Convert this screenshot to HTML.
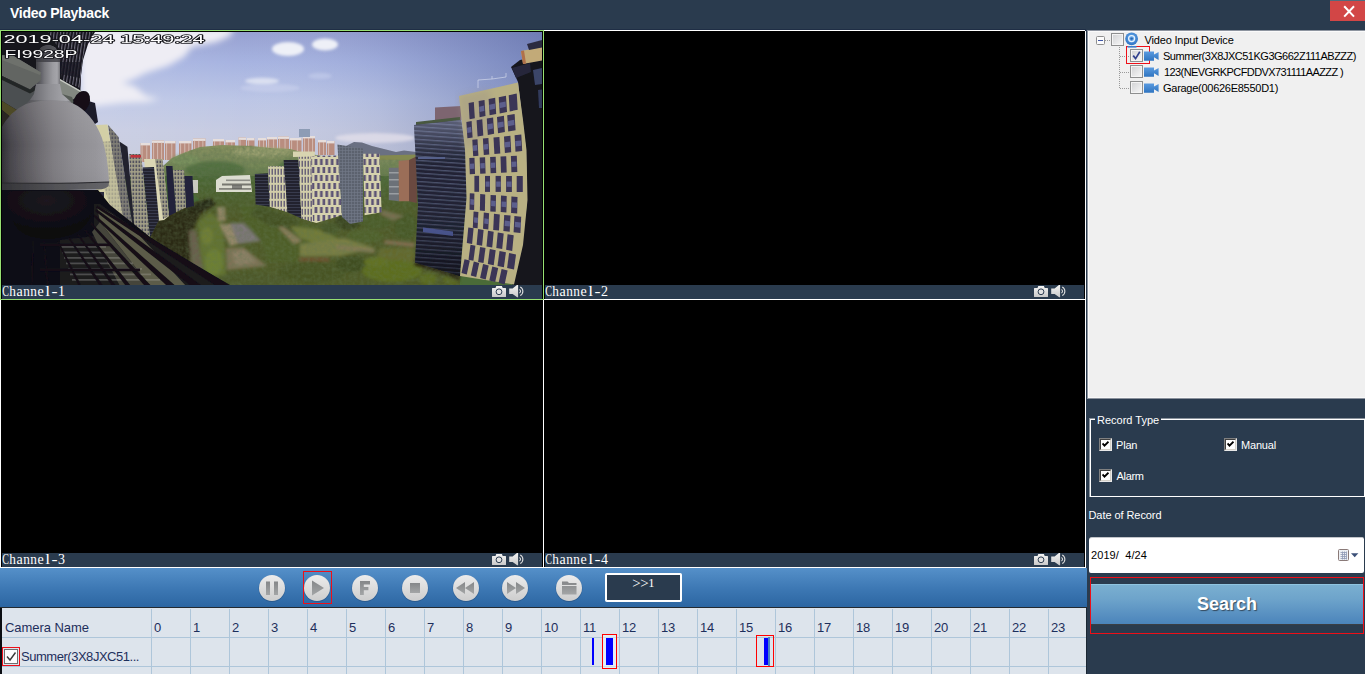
<!DOCTYPE html>
<html><head><meta charset="utf-8">
<style>
*{box-sizing:border-box;margin:0;padding:0}
html,body{width:1365px;height:674px;overflow:hidden;background:#2a3b4e;font-family:"Liberation Sans",sans-serif;}
.abs{position:absolute}
#title{position:absolute;left:10px;top:4px;color:#fff;font-weight:bold;font-size:14px;line-height:18px;letter-spacing:-0.25px;white-space:nowrap}
#close{position:absolute;left:1330px;top:0;width:35px;height:21px;background:#d24646;border-top:1px solid #516b7c}
.panel{position:absolute;background:#000;border:1px solid #fff}
.lbl{position:absolute;left:1px;right:1px;bottom:0;height:14px;background:#2a3b4e;color:#fff;font-family:"Liberation Mono",monospace;font-size:11.5px;line-height:14px;white-space:nowrap}
.lbl span{position:absolute;left:0px;top:0px}
#tree{position:absolute;left:1087px;top:30px;width:278px;height:369px;background:#f0f0f0;border-left:1px solid #8d949f;border-top:1px solid #8d949f;box-shadow:inset 1px 1px 0 #fafafa, inset 0 -2px 0 #f8f8f8}
.tl{position:absolute;font-size:11px;color:#000;white-space:nowrap;line-height:16px}
#toolbar{position:absolute;left:0;top:568px;width:1087px;height:39px;background:linear-gradient(#5590c9,#3c77b3 55%,#2c66a2)}
#tline{position:absolute;left:2px;top:608px;width:1084px;height:66px;background:#dde4ec;overflow:hidden}
.cbw{position:absolute;width:13px;height:13px;background:#fff;border:1px solid #8e8f8f}
.wt{position:absolute;color:#fff;font-size:11px;white-space:nowrap;line-height:14px}
</style></head><body>
<div id="title">Video Playback</div>
<div id="close"><svg class="abs" style="left:0;top:0" width="35" height="20" viewBox="0 0 35 20"><path d="M14.2 5.2 L24 15.6 M24 5.2 L14.2 15.6" stroke="#fff" stroke-width="2" fill="none"/></svg></div>
<div class="abs" style="left:0;top:29px;width:1086px;height:1px;background:#1f2e45"></div>

<!-- video panels -->
<div class="panel" id="p2" style="left:543px;top:30px;width:543px;height:270px"><div class="lbl" style="left:1px"><svg class="abs" style="left:0;top:0" width="80" height="14" font-family="Liberation Serif" font-size="14" fill="#fff" text-anchor="middle"><text transform="translate(3.6 11) scale(0.72 1)">C</text><text transform="translate(10.6 11) scale(0.95 1)">h</text><text x="17.6" y="11">a</text><text transform="translate(24.6 11) scale(0.95 1)">n</text><text transform="translate(31.6 11) scale(0.95 1)">n</text><text x="38.6" y="11">e</text><text transform="translate(45.6 11) scale(1.25 1)">l</text><text transform="translate(52.6 11) scale(1.3 1)">-</text><text x="59.6" y="11">2</text></svg><svg class="abs" style="right:17px;top:0" width="34" height="14" viewBox="491 285 34 14"><defs><linearGradient id="ig" x1="0" y1="0" x2="0" y2="1"><stop offset="0" stop-color="#f4f4f4"/><stop offset="1" stop-color="#c9c9c9"/></linearGradient></defs><path d="M492 288.6 q0 -0.6 .6 -.6 h2.9 l0.8 -2 h5.6 l0.8 2 h2.7 q.6 0 .6 .6 v7.8 q0 .6 -.6 .6 h-12.8 q-.6 0 -.6 -.6z" fill="url(#ig)"/><circle cx="499" cy="291.8" r="2.9" fill="#e2e2e2" stroke="#2c3d52" stroke-width="1"/><path d="M509.2 288.4 h3.4 l4.6 -3.6 h0.9 v12.4 h-0.9 l-4.6 -3.2 h-3.4 z" fill="url(#ig)"/><path d="M519.4 289.4 a2 2 0 0 1 0 3.6 M520.2 286.9 a4.8 4.8 0 0 1 0 8.6" stroke="#dcdcdc" fill="none" stroke-width="1.1"/></svg></div></div>
<div class="panel" id="p3" style="left:0;top:299px;width:544px;height:269px"><div class="lbl"><svg class="abs" style="left:0;top:0" width="80" height="14" font-family="Liberation Serif" font-size="14" fill="#fff" text-anchor="middle"><text transform="translate(3.6 11) scale(0.72 1)">C</text><text transform="translate(10.6 11) scale(0.95 1)">h</text><text x="17.6" y="11">a</text><text transform="translate(24.6 11) scale(0.95 1)">n</text><text transform="translate(31.6 11) scale(0.95 1)">n</text><text x="38.6" y="11">e</text><text transform="translate(45.6 11) scale(1.25 1)">l</text><text transform="translate(52.6 11) scale(1.3 1)">-</text><text x="59.6" y="11">3</text></svg><svg class="abs" style="right:17px;top:0" width="34" height="14" viewBox="491 285 34 14"><defs><linearGradient id="ig" x1="0" y1="0" x2="0" y2="1"><stop offset="0" stop-color="#f4f4f4"/><stop offset="1" stop-color="#c9c9c9"/></linearGradient></defs><path d="M492 288.6 q0 -0.6 .6 -.6 h2.9 l0.8 -2 h5.6 l0.8 2 h2.7 q.6 0 .6 .6 v7.8 q0 .6 -.6 .6 h-12.8 q-.6 0 -.6 -.6z" fill="url(#ig)"/><circle cx="499" cy="291.8" r="2.9" fill="#e2e2e2" stroke="#2c3d52" stroke-width="1"/><path d="M509.2 288.4 h3.4 l4.6 -3.6 h0.9 v12.4 h-0.9 l-4.6 -3.2 h-3.4 z" fill="url(#ig)"/><path d="M519.4 289.4 a2 2 0 0 1 0 3.6 M520.2 286.9 a4.8 4.8 0 0 1 0 8.6" stroke="#dcdcdc" fill="none" stroke-width="1.1"/></svg></div></div>
<div class="panel" id="p4" style="left:543px;top:299px;width:543px;height:269px"><div class="lbl" style="left:1px"><svg class="abs" style="left:0;top:0" width="80" height="14" font-family="Liberation Serif" font-size="14" fill="#fff" text-anchor="middle"><text transform="translate(3.6 11) scale(0.72 1)">C</text><text transform="translate(10.6 11) scale(0.95 1)">h</text><text x="17.6" y="11">a</text><text transform="translate(24.6 11) scale(0.95 1)">n</text><text transform="translate(31.6 11) scale(0.95 1)">n</text><text x="38.6" y="11">e</text><text transform="translate(45.6 11) scale(1.25 1)">l</text><text transform="translate(52.6 11) scale(1.3 1)">-</text><text x="59.6" y="11">4</text></svg><svg class="abs" style="right:17px;top:0" width="34" height="14" viewBox="491 285 34 14"><defs><linearGradient id="ig" x1="0" y1="0" x2="0" y2="1"><stop offset="0" stop-color="#f4f4f4"/><stop offset="1" stop-color="#c9c9c9"/></linearGradient></defs><path d="M492 288.6 q0 -0.6 .6 -.6 h2.9 l0.8 -2 h5.6 l0.8 2 h2.7 q.6 0 .6 .6 v7.8 q0 .6 -.6 .6 h-12.8 q-.6 0 -.6 -.6z" fill="url(#ig)"/><circle cx="499" cy="291.8" r="2.9" fill="#e2e2e2" stroke="#2c3d52" stroke-width="1"/><path d="M509.2 288.4 h3.4 l4.6 -3.6 h0.9 v12.4 h-0.9 l-4.6 -3.2 h-3.4 z" fill="url(#ig)"/><path d="M519.4 289.4 a2 2 0 0 1 0 3.6 M520.2 286.9 a4.8 4.8 0 0 1 0 8.6" stroke="#dcdcdc" fill="none" stroke-width="1.1"/></svg></div></div>
<div class="panel" id="p1" style="left:0;top:30px;width:544px;height:270px;border-color:#97e073"><div class="lbl"><svg class="abs" style="left:0;top:0" width="80" height="14" font-family="Liberation Serif" font-size="14" fill="#fff" text-anchor="middle"><text transform="translate(3.6 11) scale(0.72 1)">C</text><text transform="translate(10.6 11) scale(0.95 1)">h</text><text x="17.6" y="11">a</text><text transform="translate(24.6 11) scale(0.95 1)">n</text><text transform="translate(31.6 11) scale(0.95 1)">n</text><text x="38.6" y="11">e</text><text transform="translate(45.6 11) scale(1.25 1)">l</text><text transform="translate(52.6 11) scale(1.3 1)">-</text><text x="59.6" y="11">1</text></svg><svg class="abs" style="right:17px;top:0" width="34" height="14" viewBox="491 285 34 14"><defs><linearGradient id="ig" x1="0" y1="0" x2="0" y2="1"><stop offset="0" stop-color="#f4f4f4"/><stop offset="1" stop-color="#c9c9c9"/></linearGradient></defs><path d="M492 288.6 q0 -0.6 .6 -.6 h2.9 l0.8 -2 h5.6 l0.8 2 h2.7 q.6 0 .6 .6 v7.8 q0 .6 -.6 .6 h-12.8 q-.6 0 -.6 -.6z" fill="url(#ig)"/><circle cx="499" cy="291.8" r="2.9" fill="#e2e2e2" stroke="#2c3d52" stroke-width="1"/><path d="M509.2 288.4 h3.4 l4.6 -3.6 h0.9 v12.4 h-0.9 l-4.6 -3.2 h-3.4 z" fill="url(#ig)"/><path d="M519.4 289.4 a2 2 0 0 1 0 3.6 M520.2 286.9 a4.8 4.8 0 0 1 0 8.6" stroke="#dcdcdc" fill="none" stroke-width="1.1"/></svg></div>
<svg class="abs" style="left:1px;top:1px" width="540" height="253" viewBox="2 32 540 253">
<defs>
<linearGradient id="sky" x1="0" y1="0" x2="0" y2="1"><stop offset="0" stop-color="#959fd0"/><stop offset="0.12" stop-color="#a5b2e0"/><stop offset="0.27" stop-color="#bbc5e5"/><stop offset="0.39" stop-color="#c5cae1"/><stop offset="0.5" stop-color="#c5c9dc"/><stop offset="1" stop-color="#c5c9dc"/></linearGradient>
<linearGradient id="skyr" x1="0" y1="0" x2="1" y2="0"><stop offset="0" stop-color="#fff" stop-opacity="0.18"/><stop offset="0.45" stop-color="#fff" stop-opacity="0.02"/><stop offset="0.7" stop-color="#50609a" stop-opacity="0.10"/><stop offset="1" stop-color="#4a5a98" stop-opacity="0.5"/></linearGradient>
<linearGradient id="dome" x1="0" y1="0" x2="1" y2="0"><stop offset="0.03" stop-color="#2f2d34"/><stop offset="0.12" stop-color="#48464c"/><stop offset="0.25" stop-color="#5c5a5f"/><stop offset="0.38" stop-color="#6e6c71"/><stop offset="0.5" stop-color="#7e7c81"/><stop offset="0.7" stop-color="#8e8d92"/><stop offset="0.88" stop-color="#96959a"/><stop offset="1" stop-color="#a09fa5"/></linearGradient><linearGradient id="domev" x1="0" y1="0" x2="0" y2="1"><stop offset="0" stop-color="#fff" stop-opacity="0.10"/><stop offset="0.5" stop-color="#fff" stop-opacity="0"/><stop offset="1" stop-color="#000" stop-opacity="0.06"/></linearGradient><linearGradient id="neckg" x1="0" y1="0" x2="1" y2="0"><stop offset="0" stop-color="#58585e"/><stop offset="0.5" stop-color="#8e8e93"/><stop offset="0.85" stop-color="#a6a6ab"/><stop offset="1" stop-color="#8a8a90"/></linearGradient>
<radialGradient id="bdome" cx="0.45" cy="0.2" r="0.8"><stop offset="0" stop-color="#1c1820"/><stop offset="1" stop-color="#09070c"/></radialGradient>
<linearGradient id="hill" x1="0" y1="0" x2="0" y2="1"><stop offset="0" stop-color="#8a9262"/><stop offset="0.35" stop-color="#78895a"/><stop offset="0.7" stop-color="#5f7a4a"/><stop offset="1" stop-color="#4f6f3f"/></linearGradient>
<filter id="b1"><feGaussianBlur stdDeviation="0.6"/></filter>
<filter id="b2"><feGaussianBlur stdDeviation="1.4"/></filter>
<filter id="b3"><feGaussianBlur stdDeviation="3"/></filter>
<filter id="b5"><feGaussianBlur stdDeviation="5"/></filter>
<pattern id="win" width="5.4" height="16" patternUnits="userSpaceOnUse" x="298" y="158"><rect width="5.4" height="16" fill="#d6d2ae"/><rect x="0.4" y="1" width="2.7" height="6" fill="#5c5374"/><rect x="3.0" y="9" width="2.6" height="6" fill="#5c5374"/><rect x="-2.4" y="9" width="2.6" height="6" fill="#5c5374"/></pattern><pattern id="winS" width="3" height="8" patternUnits="userSpaceOnUse" x="268" y="168"><rect width="3" height="8" fill="#d2ceaa"/><rect x="0.5" y="0.8" width="1.5" height="6" fill="#6a6478"/></pattern>
<pattern id="win2" width="3" height="4" patternUnits="userSpaceOnUse"><rect width="3" height="4" fill="#a5a288"/><rect x="0.5" y="0.6" width="1.7" height="2.5" fill="#53535e"/></pattern>
<pattern id="glass" width="6" height="4.2" patternUnits="userSpaceOnUse" patternTransform="rotate(4)"><rect width="6" height="4.2" fill="#1f2131"/><rect y="0" width="6" height="1.3" fill="#4d546f"/></pattern>
<pattern id="glass2" width="6" height="3" patternUnits="userSpaceOnUse"><rect width="6" height="3" fill="#20222f"/><rect y="0" width="6" height="0.9" fill="#3a3d50"/></pattern>
<pattern id="scaf" width="3" height="3" patternUnits="userSpaceOnUse"><rect width="3" height="3" fill="#5c626e"/><rect width="3" height="0.7" fill="#727886"/><rect width="0.7" height="3" fill="#727886"/></pattern>
<pattern id="stripe" width="3.2" height="10" patternUnits="userSpaceOnUse" patternTransform="rotate(8)"><rect width="3.2" height="10" fill="#17141f"/><rect width="1.1" height="10" fill="#6d6c78"/></pattern>
<filter id="noise" x="0" y="0" width="1" height="1"><feTurbulence type="fractalNoise" baseFrequency="0.28" numOctaves="2" seed="3" result="t"/><feColorMatrix type="matrix" values="0 0 0 0 0.12  0 0 0 0 0.18  0 0 0 0 0.08  0.9 0.9 0 0 -0.62"/></filter>
<clipPath id="parkclip"><polygon points="150,290 150,236 160,215 200,200 165,166 190,150 250,145 320,156 420,160 420,205 416,262 460,276 460,290"/></clipPath><linearGradient id="ovl" gradientUnits="userSpaceOnUse" x1="0" y1="168" x2="0" y2="215"><stop offset="0" stop-color="#5a3000" stop-opacity="0"/><stop offset="1" stop-color="#5a3000" stop-opacity="0.30"/></linearGradient><clipPath id="hillclip"><polygon points="160,200 163,166 172,158 186,152 200,147 222,145 250,146 270,148 290,149 305,153 322,156 345,160 420,160 420,200"/></clipPath>
<linearGradient id="gshade" x1="0" y1="0" x2="0" y2="1"><stop offset="0" stop-color="#9aa0c0" stop-opacity="0.5"/><stop offset="0.12" stop-color="#8890b0" stop-opacity="0.3"/><stop offset="0.3" stop-color="#404660" stop-opacity="0.05"/><stop offset="1" stop-color="#000" stop-opacity="0.45"/></linearGradient>
<linearGradient id="armg" x1="0" y1="0" x2="1" y2="0"><stop offset="0" stop-color="#424248"/><stop offset="0.35" stop-color="#77777c"/><stop offset="0.7" stop-color="#9c9ca1"/><stop offset="0.88" stop-color="#a5a5aa"/><stop offset="1" stop-color="#77777c"/></linearGradient>
<linearGradient id="rimg" x1="0" y1="0" x2="1" y2="0"><stop offset="0" stop-color="#343438"/><stop offset="0.5" stop-color="#525256"/><stop offset="1" stop-color="#66666a"/></linearGradient>
<clipPath id="clipv"><rect x="2" y="32" width="540" height="253"/></clipPath>
</defs>
<g clip-path="url(#clipv)">
<rect x="2" y="32" width="540" height="253" fill="url(#sky)"/>
<rect x="2" y="32" width="540" height="130" fill="url(#skyr)"/>
<g filter="url(#b3)">
<polygon points="84.0,28.0 234.0,28.0 230.0,36.0 217.0,42.0 192.0,47.0 184.0,57.0 168.0,66.0 146.0,73.0 134.0,79.0 122.0,83.0 134.0,86.0 146.0,96.0 160.0,99.0 146.0,102.0 122.0,103.0 96.0,106.0 82.0,104.0 80.0,60.0" fill="#eeedf4" />
</g>
<g filter="url(#b2)">
<ellipse cx="288" cy="49" rx="16" ry="7" fill="#eef0f7"/><ellipse cx="325" cy="44.5" rx="13" ry="6" fill="#eef0f7"/>
<ellipse cx="262" cy="81" rx="17" ry="3.2" fill="#dfe3f2" opacity="0.9"/><ellipse cx="270" cy="88" rx="30" ry="4" fill="#c9d0ec" opacity="0.6"/>
<ellipse cx="320" cy="76" rx="12" ry="3" fill="#c2caea" opacity="0.7"/>
<ellipse cx="375" cy="138" rx="40" ry="5" fill="#e2dfea" opacity="0.8"/>
</g>
<g filter="url(#b1)">
<polygon points="340.0,150.0 346.0,146.0 354.0,142.0 362.0,142.5 372.0,146.0 384.0,149.0 396.0,152.0 404.0,150.5 416.0,152.0 418.0,162.0 340.0,162.0" fill="#6b7082" />
<polygon points="378.0,155.5 418.0,154.5 418.0,163.0 378.0,163.0" fill="#83894f" />
<polygon points="140.5,143.0 150.0,143.0 150.0,162.0 140.5,162.0" fill="#b98d7f" /><rect x="140.5" y="143" width="9.5" height="2.4" fill="#e6dedc"/><rect x="141.5" y="145" width="1.1" height="17" fill="#dcc8c0" opacity="0.7"/><rect x="146.2" y="145" width="1.1" height="17" fill="#dcc8c0" opacity="0.7"/>
<polygon points="152.0,140.5 164.0,140.5 164.0,160.0 152.0,160.0" fill="#b98d7f" /><rect x="152" y="140.5" width="12" height="2.4" fill="#e6dedc"/><rect x="153.0" y="142.5" width="1.1" height="17.5" fill="#dcc8c0" opacity="0.7"/><rect x="157.0" y="142.5" width="1.1" height="17.5" fill="#dcc8c0" opacity="0.7"/><rect x="161.0" y="142.5" width="1.1" height="17.5" fill="#dcc8c0" opacity="0.7"/>
<polygon points="165.0,141.0 175.5,141.0 175.5,160.0 165.0,160.0" fill="#b98d7f" /><rect x="165" y="141" width="10.5" height="2.4" fill="#e6dedc"/><rect x="166.0" y="143" width="1.1" height="17" fill="#dcc8c0" opacity="0.7"/><rect x="171.2" y="143" width="1.1" height="17" fill="#dcc8c0" opacity="0.7"/>
<polygon points="179.0,141.0 191.5,141.0 191.5,158.0 179.0,158.0" fill="#b98d7f" /><rect x="179" y="141" width="12.5" height="2.4" fill="#e6dedc"/><rect x="180.0" y="143" width="1.1" height="15" fill="#dcc8c0" opacity="0.7"/><rect x="184.2" y="143" width="1.1" height="15" fill="#dcc8c0" opacity="0.7"/><rect x="188.3" y="143" width="1.1" height="15" fill="#dcc8c0" opacity="0.7"/>
<polygon points="193.0,138.5 205.5,138.5 205.5,157.0 193.0,157.0" fill="#b98d7f" /><rect x="193" y="138.5" width="12.5" height="2.4" fill="#e6dedc"/><rect x="194.0" y="140.5" width="1.1" height="16.5" fill="#dcc8c0" opacity="0.7"/><rect x="198.2" y="140.5" width="1.1" height="16.5" fill="#dcc8c0" opacity="0.7"/><rect x="202.3" y="140.5" width="1.1" height="16.5" fill="#dcc8c0" opacity="0.7"/>
<polygon points="213.0,139.0 224.0,139.0 224.0,150.0 213.0,150.0" fill="#b98d7f" /><rect x="213" y="139" width="11" height="2.4" fill="#e6dedc"/><rect x="214.0" y="141" width="1.1" height="9" fill="#dcc8c0" opacity="0.7"/><rect x="219.5" y="141" width="1.1" height="9" fill="#dcc8c0" opacity="0.7"/>
<polygon points="225.5,140.0 235.0,140.0 235.0,149.0 225.5,149.0" fill="#b98d7f" /><rect x="225.5" y="140" width="9.5" height="2.4" fill="#e6dedc"/><rect x="226.5" y="142" width="1.1" height="7" fill="#dcc8c0" opacity="0.7"/><rect x="231.2" y="142" width="1.1" height="7" fill="#dcc8c0" opacity="0.7"/>
<polygon points="238.5,137.5 246.0,137.5 246.0,149.0 238.5,149.0" fill="#b98d7f" /><rect x="238.5" y="137.5" width="7.5" height="2.4" fill="#e6dedc"/><rect x="239.5" y="139.5" width="1.1" height="9.5" fill="#dcc8c0" opacity="0.7"/>
<polygon points="247.0,138.0 254.5,138.0 254.5,149.0 247.0,149.0" fill="#b98d7f" /><rect x="247" y="138" width="7.5" height="2.4" fill="#e6dedc"/><rect x="248.0" y="140" width="1.1" height="9" fill="#dcc8c0" opacity="0.7"/>
<polygon points="258.0,138.0 266.0,138.0 266.0,152.0 258.0,152.0" fill="#b98d7f" /><rect x="258" y="138" width="8" height="2.4" fill="#e6dedc"/><rect x="259.0" y="140" width="1.1" height="12" fill="#dcc8c0" opacity="0.7"/><rect x="263.0" y="140" width="1.1" height="12" fill="#dcc8c0" opacity="0.7"/>
<polygon points="267.0,137.0 277.0,137.0 277.0,152.0 267.0,152.0" fill="#b98d7f" /><rect x="267" y="137" width="10" height="2.4" fill="#e6dedc"/><rect x="268.0" y="139" width="1.1" height="13" fill="#dcc8c0" opacity="0.7"/><rect x="273.0" y="139" width="1.1" height="13" fill="#dcc8c0" opacity="0.7"/>
<polygon points="278.0,136.5 289.0,136.5 289.0,152.0 278.0,152.0" fill="#b98d7f" /><rect x="278" y="136.5" width="11" height="2.4" fill="#e6dedc"/><rect x="279.0" y="138.5" width="1.1" height="13.5" fill="#dcc8c0" opacity="0.7"/><rect x="284.5" y="138.5" width="1.1" height="13.5" fill="#dcc8c0" opacity="0.7"/>
<polygon points="290.0,138.0 301.5,138.0 301.5,152.0 290.0,152.0" fill="#b98d7f" /><rect x="290" y="138" width="11.5" height="2.4" fill="#e6dedc"/><rect x="291.0" y="140" width="1.1" height="12" fill="#dcc8c0" opacity="0.7"/><rect x="296.8" y="140" width="1.1" height="12" fill="#dcc8c0" opacity="0.7"/>
<polygon points="303.0,136.0 315.0,136.0 315.0,152.0 303.0,152.0" fill="#b98d7f" /><rect x="303" y="136" width="12" height="2.4" fill="#e6dedc"/><rect x="304.0" y="138" width="1.1" height="14" fill="#dcc8c0" opacity="0.7"/><rect x="308.0" y="138" width="1.1" height="14" fill="#dcc8c0" opacity="0.7"/><rect x="312.0" y="138" width="1.1" height="14" fill="#dcc8c0" opacity="0.7"/>
<polygon points="318.0,140.0 326.0,140.0 326.0,155.0 318.0,155.0" fill="#b98d7f" /><rect x="318" y="140" width="8" height="2.4" fill="#e6dedc"/><rect x="319.0" y="142" width="1.1" height="13" fill="#dcc8c0" opacity="0.7"/><rect x="323.0" y="142" width="1.1" height="13" fill="#dcc8c0" opacity="0.7"/>
<polygon points="327.0,141.0 334.5,141.0 334.5,155.0 327.0,155.0" fill="#b98d7f" /><rect x="327" y="141" width="7.5" height="2.4" fill="#e6dedc"/><rect x="328.0" y="143" width="1.1" height="12" fill="#dcc8c0" opacity="0.7"/>
<rect x="299" y="129" width="11" height="8" fill="#8d9cb5"/>
<polygon points="160.0,200.0 163.0,166.0 172.0,158.0 186.0,152.0 200.0,147.0 222.0,145.0 250.0,146.0 270.0,148.0 290.0,149.0 305.0,153.0 322.0,156.0 345.0,160.0 420.0,160.0 420.0,200.0" fill="url(#hill)" />
</g>
<rect x="100" y="176" width="442" height="110" fill="#4a6b38"/>
<g filter="url(#b2)">
<ellipse cx="215" cy="170" rx="30" ry="9" fill="#4a6b3c" opacity="0.8"/>
<ellipse cx="262" cy="152" rx="30" ry="5" fill="#a4a678" opacity="0.7"/>
<ellipse cx="185" cy="160" rx="14" ry="6" fill="#7c9560" opacity="0.6"/>
<ellipse cx="300" cy="166" rx="22" ry="6" fill="#44683a" opacity="0.7"/>
<polygon points="150.0,236.0 158.0,220.0 176.0,212.0 195.0,203.0 210.0,198.0 216.0,204.0 200.0,214.0 192.0,232.0 190.0,262.0 192.0,280.0 176.0,262.0 162.0,250.0" fill="#18251b" />
<polygon points="198.0,222.0 210.0,212.0 222.0,222.0 225.0,250.0 226.0,276.0 204.0,276.0 200.0,250.0" fill="#668f44" />
<ellipse cx="214" cy="262" rx="9" ry="13" fill="#76a248"/>
<ellipse cx="207" cy="236" rx="6" ry="9" fill="#7aa04c"/>
<polygon points="189.0,231.0 196.0,230.0 203.0,270.0 192.0,271.0" fill="#6f756e" />
<polygon points="217.0,207.0 225.0,207.0 226.0,221.0 218.0,221.0" fill="#a9a88e" />
<polygon points="219.5,224.0 231.0,224.0 238.0,244.0 230.0,246.0" fill="#b3b09a" />
<polygon points="230.0,223.0 243.5,223.0 261.0,241.0 238.0,244.0" fill="#8d96ac" />
<polygon points="226.0,248.0 243.0,247.0 267.0,266.0 227.0,270.0" fill="#8f907c" />
<polygon points="232.0,252.0 246.0,250.0 256.0,262.0 236.0,266.0" fill="#a3a392" />
<polygon points="240.0,204.0 300.0,222.0 336.0,232.0 345.0,250.0 300.0,262.0 268.0,262.0 262.0,243.0 244.0,222.0" fill="#4a7239" />
<polygon points="258.0,206.0 300.0,220.0 296.0,232.0 270.0,226.0 250.0,214.0" fill="#3b5f33" />
<polygon points="278.0,227.0 283.5,227.0 302.0,241.0 294.0,244.0" fill="#a0a083" />
<polygon points="290.0,226.0 322.0,230.0 340.0,240.0 318.0,244.0 300.0,238.0" fill="#7d9c52" />
<polygon points="300.0,244.0 344.0,238.0 375.0,248.0 340.0,256.0 300.0,256.0" fill="#88a062" />
<rect x="299" y="257.5" width="30" height="4" fill="#8a5a48" opacity="0.75"/>
<ellipse cx="348" cy="222" rx="13" ry="8" fill="#2f4f2d"/>
<ellipse cx="330" cy="228" rx="10" ry="6" fill="#41673a"/>
<ellipse cx="376" cy="221" rx="16" ry="8" fill="#45703a"/>
<ellipse cx="406" cy="226" rx="12" ry="13" fill="#416a37"/>
<ellipse cx="365" cy="236" rx="18" ry="7" fill="#4c763c"/>
<polygon points="383.0,210.0 404.0,216.0 393.0,220.5 380.0,214.0" fill="#868a72" />
<polygon points="385.0,240.0 415.0,243.0 414.0,247.0 384.0,244.0" fill="#988a76" />
<polygon points="337.0,245.0 375.0,249.0 374.0,253.0 336.0,249.0" fill="#979a7a" />
<polygon points="380.0,248.0 413.5,248.0 416.0,264.0 375.0,262.0" fill="#69823f" />
<ellipse cx="312" cy="272" rx="34" ry="11" fill="#3f6433"/>
<ellipse cx="250" cy="280" rx="36" ry="7" fill="#46693a"/>
<ellipse cx="352" cy="264" rx="16" ry="8" fill="#365a2f"/>
<ellipse cx="392" cy="271" rx="30" ry="11" fill="#5e882c"/>
<ellipse cx="376" cy="262" rx="12" ry="5" fill="#668e30"/>
<ellipse cx="428" cy="279" rx="9" ry="6" fill="#5c842e"/>
<ellipse cx="452" cy="280" rx="9" ry="5" fill="#5a8030"/>
<polygon points="414.0,258.0 460.0,272.0 460.0,282.0 438.0,272.0 414.0,266.0" fill="#16201a" />
</g>
<rect x="100" y="145" width="442" height="141" fill="url(#ovl)" clip-path="url(#parkclip)"/>
<rect x="100" y="145" width="442" height="141" filter="url(#noise)" opacity="0.55" clip-path="url(#parkclip)"/>
<rect x="150" y="140" width="280" height="62" filter="url(#noise)" opacity="0.3" clip-path="url(#hillclip)"/>
<g filter="url(#b1)">
<polygon points="216.0,180.0 222.0,176.0 250.0,175.0 252.0,192.0 216.0,192.0" fill="#dcdcd0" />
<rect x="226" y="179.5" width="24" height="1.6" fill="#8e8e88"/><rect x="222" y="183.5" width="29" height="2" fill="#77776f"/><rect x="219" y="188" width="32" height="1.8" fill="#86867e"/><rect x="232" y="185" width="10" height="4" fill="#5a5a58" opacity="0.7"/>
<polygon points="254.8,174.0 268.0,173.3 269.6,206.8 255.6,204.4" fill="url(#glass2)" />
<polygon points="268.0,166.3 285.2,166.3 287.5,212.2 269.6,206.8" fill="url(#winS)" />
<polygon points="283.6,160.0 298.4,160.0 301.5,218.5 287.5,212.2" fill="url(#glass2)" />
<polygon points="298.4,156.0 339.0,155.4 342.0,215.3 316.3,223.0 301.5,218.5" fill="url(#win)" />
<polygon points="298.4,156.0 311.0,156.0 313.0,222.0 301.5,218.5" fill="url(#winS)" />
<polygon points="293.0,151.5 314.8,151.5 314.8,156.5 293.0,157.0" fill="#d8d4b0" />
<polygon points="337.4,144.5 363.0,148.4 363.0,221.6 350.0,224.0 342.0,217.0" fill="url(#scaf)" />
<polygon points="363.0,153.8 379.4,153.8 381.7,212.2 364.6,215.3" fill="url(#win)" />
<polygon points="388.8,167.8 398.9,167.8 398.9,201.3 388.8,200.0" fill="#6c7178" />
<rect x="389" y="172" width="10" height="1.5" fill="#9a9ea2"/><rect x="389" y="179" width="10" height="1.5" fill="#9a9ea2"/><rect x="389" y="186" width="10" height="1.5" fill="#9a9ea2"/><rect x="389" y="193" width="10" height="1.5" fill="#9a9ea2"/>
<polygon points="398.6,160.8 409.0,160.0 409.0,201.3 398.9,201.3" fill="#9b6e58" />
<polygon points="409.0,160.0 416.8,156.2 416.8,203.0 409.0,201.3" fill="#6b4940" />
</g>
<g filter="url(#b1)">
<polygon points="192.0,180.0 198.0,180.0 198.0,193.0 192.0,193.0" fill="#c9c9c2" />
<polygon points="184.0,176.0 192.5,176.0 194.0,206.0 186.0,208.0" fill="#23243a" />
<polygon points="172.5,170.0 184.0,170.0 186.0,207.5 176.0,212.0" fill="url(#win2)" />
<polygon points="166.0,166.0 172.5,166.0 176.0,212.5 169.0,216.0" fill="#23243a" />
<polygon points="144.0,159.0 162.5,159.0 169.0,216.0 164.0,220.0 150.0,222.0" fill="#dbd7b4" />
<polygon points="155.0,159.0 162.5,159.0 169.0,216.0 163.0,219.0" fill="url(#win2)" />
<polygon points="142.5,167.5 154.0,167.0 159.0,220.0 150.0,237.5" fill="url(#glass2)" />
<polygon points="129.0,154.0 141.0,154.0 150.0,237.5 133.0,225.0" fill="url(#win2)" />
<rect x="130.5" y="155" width="10.5" height="2.6" fill="#c0303a"/>
<polygon points="108.0,125.0 118.5,137.0 132.8,227.0 122.0,224.0" fill="url(#win2)" />
<polygon points="108.0,125.0 118.5,137.0 132.8,227.0 122.0,224.0" fill="#50505c"  opacity="0.42"/>
<polygon points="119.4,141.4 127.4,146.7 134.5,228.0 132.8,227.0" fill="#22232f" />
<polygon points="93.0,125.3 107.5,124.5 124.0,224.0 112.0,216.0 100.0,215.0 96.0,190.0 100.0,160.0" fill="#d3cfa6" />
<polygon points="99.0,142.0 110.0,141.0 124.0,224.0 112.0,212.0 101.0,178.0" fill="url(#win2)"  opacity="0.35"/>
<polygon points="96.6,192.0 104.0,192.0 104.0,204.7 96.6,204.7" fill="#2a2c3c" />
</g>
<g filter="url(#b1)">
<polygon points="435.0,107.5 461.5,106.0 461.5,120.0 435.0,121.0" fill="#7d6570" />
<polygon points="416.0,122.0 460.0,117.0 460.0,120.5 416.0,125.5" fill="#48583f" />
<polygon points="414.0,125.0 461.0,120.0 466.0,150.0 467.0,198.0 463.0,240.0 460.0,276.0 415.0,262.5 418.0,205.0" fill="url(#glass)" />
<polygon points="423.0,227.5 453.0,231.5 453.0,236.0 423.0,232.0" fill="#5a68b4" />
<polygon points="414.0,125.0 461.0,120.0 466.0,150.0 467.0,198.0 463.0,240.0 460.0,276.0 415.0,262.5 418.0,205.0" fill="url(#gshade)" />
<polygon points="418.0,157.0 445.0,157.0 445.0,159.0 418.0,159.0" fill="#55608a" />
<polygon points="511.0,67.0 520.0,60.0 542.0,56.0 542.0,286.0 512.0,286.0 520.0,250.0 527.0,205.0 526.0,150.0 518.0,82.0" fill="#15151f" />
<polygon points="521.0,51.0 542.0,47.0 542.0,60.5 523.0,64.0" fill="#c2aa78" />
<polygon points="521.0,51.0 524.0,50.5 526.0,63.5 523.0,64.0" fill="#b0704a" />
<polygon points="527.0,44.0 542.0,40.0 542.0,47.5 529.0,50.0" fill="#2a2c40" />
<polygon points="533.0,70.0 542.0,68.0 542.0,84.0 535.0,85.0" fill="#3a4468" />
<polygon points="538.0,90.0 542.0,89.5 542.0,108.0 539.0,108.0" fill="#323a5c" />
<polygon points="512.0,68.0 530.0,63.0 531.0,72.0 516.0,78.0" fill="#26283a" />
<polygon points="459.0,96.0 518.0,82.5 523.0,120.0 526.5,150.0 527.5,200.0 523.0,245.0 514.0,284.5 460.0,276.0 463.0,240.0 466.5,198.0 465.0,150.0" fill="#b8b083" />
</g>
<polygon points="459.0,96.0 490.0,89.0 492.0,130.0 465.0,150.0" fill="#9a9088"  opacity="0.35" filter="url(#b3)"/>
<g filter="url(#b1)">
<polygon points="468.6,103.0 473.8,102.0 474.8,118.2 469.6,119.2" fill="#3a3456" />
<polygon points="478.6,101.0 484.5,99.9 485.5,116.1 479.6,117.2" fill="#3a3456" />
<polygon points="479.2,106.7 484.1,105.6 484.4,110.9 479.5,112.1" fill="#66699a"  opacity="0.8"/>
<polygon points="488.6,99.1 495.2,97.8 496.2,114.0 489.6,115.3" fill="#3a3456" />
<polygon points="489.2,104.8 494.9,103.5 495.2,108.8 489.6,110.1" fill="#66699a"  opacity="0.8"/>
<polygon points="498.7,97.2 506.0,95.7 507.0,111.9 499.7,113.4" fill="#3a3456" />
<polygon points="499.3,102.8 505.6,101.4 505.9,106.7 499.6,108.2" fill="#66699a"  opacity="0.8"/>
<polygon points="508.7,95.2 516.7,93.6 517.7,109.8 509.7,111.4" fill="#3a3456" />
<polygon points="466.4,122.0 471.6,121.1 472.6,137.4 467.4,138.3" fill="#3a3456" />
<polygon points="467.0,127.7 471.2,126.8 471.5,132.2 467.3,133.1" fill="#66699a"  opacity="0.8"/>
<polygon points="476.6,120.3 482.3,119.3 483.3,135.6 477.6,136.6" fill="#3a3456" />
<polygon points="486.8,118.6 493.1,117.5 494.1,133.8 487.8,134.9" fill="#3a3456" />
<polygon points="487.4,124.3 492.7,123.3 493.0,128.6 487.7,129.7" fill="#66699a"  opacity="0.8"/>
<polygon points="497.0,116.9 503.9,115.8 504.9,132.1 498.0,133.2" fill="#3a3456" />
<polygon points="497.6,122.6 503.5,121.5 503.8,126.8 497.9,128.0" fill="#66699a"  opacity="0.8"/>
<polygon points="507.2,115.2 514.6,114.0 515.6,130.3 508.2,131.5" fill="#3a3456" />
<polygon points="507.8,120.9 514.2,119.7 514.5,125.1 508.1,126.3" fill="#66699a"  opacity="0.8"/>
<polygon points="472.3,139.7 477.5,139.2 478.4,155.7 473.2,156.2" fill="#3a3456" />
<polygon points="472.9,145.5 477.1,144.9 477.4,150.4 473.2,150.9" fill="#66699a"  opacity="0.8"/>
<polygon points="482.9,138.6 488.4,138.0 489.3,154.5 483.8,155.1" fill="#3a3456" />
<polygon points="483.5,144.4 488.1,143.8 488.3,149.2 483.7,149.8" fill="#66699a"  opacity="0.8"/>
<polygon points="493.5,137.5 499.4,136.9 500.3,153.4 494.4,154.0" fill="#3a3456" />
<polygon points="504.0,136.4 510.4,135.7 511.2,152.2 504.9,152.9" fill="#3a3456" />
<polygon points="504.6,142.2 510.0,141.5 510.2,147.0 504.9,147.6" fill="#66699a"  opacity="0.8"/>
<polygon points="514.6,135.3 521.3,134.6 522.2,151.1 515.5,151.8" fill="#3a3456" />
<polygon points="515.2,141.1 520.9,140.4 521.2,145.8 515.5,146.5" fill="#66699a"  opacity="0.8"/>
<polygon points="469.3,158.0 474.5,157.8 475.0,173.9 469.8,174.2" fill="#3a3456" />
<polygon points="469.9,163.7 474.1,163.4 474.2,168.8 470.1,169.0" fill="#66699a"  opacity="0.8"/>
<polygon points="479.7,157.5 485.1,157.2 485.6,173.4 480.2,173.7" fill="#3a3456" />
<polygon points="480.3,163.2 484.7,162.9 484.8,168.3 480.4,168.5" fill="#66699a"  opacity="0.8"/>
<polygon points="490.1,157.0 495.7,156.7 496.2,172.9 490.6,173.2" fill="#3a3456" />
<polygon points="490.7,162.7 495.3,162.4 495.4,167.7 490.9,168.0" fill="#66699a"  opacity="0.8"/>
<polygon points="500.5,156.5 506.2,156.2 506.7,172.4 501.0,172.7" fill="#3a3456" />
<polygon points="510.9,156.0 516.8,155.7 517.3,171.9 511.4,172.2" fill="#3a3456" />
<polygon points="511.5,161.7 516.4,161.4 516.5,166.7 511.6,167.0" fill="#66699a"  opacity="0.8"/>
<polygon points="474.4,175.8 479.1,175.8 479.1,191.8 474.4,191.8" fill="#3a3456" />
<polygon points="485.0,175.9 490.0,175.9 490.0,191.9 485.0,191.9" fill="#3a3456" />
<polygon points="485.6,181.5 489.6,181.5 489.6,186.8 485.6,186.7" fill="#66699a"  opacity="0.8"/>
<polygon points="495.6,175.9 500.9,175.9 500.9,191.9 495.6,191.9" fill="#3a3456" />
<polygon points="496.2,181.5 500.6,181.5 500.6,186.8 496.2,186.8" fill="#66699a"  opacity="0.8"/>
<polygon points="506.1,175.9 511.9,176.0 511.9,192.0 506.1,191.9" fill="#3a3456" />
<polygon points="506.7,181.5 511.5,181.6 511.5,186.9 506.7,186.8" fill="#66699a"  opacity="0.8"/>
<polygon points="516.7,176.0 522.8,176.0 522.8,192.0 516.7,192.0" fill="#3a3456" />
<polygon points="469.8,193.3 474.4,193.6 474.1,210.1 469.5,209.8" fill="#3a3456" />
<polygon points="470.4,199.1 474.0,199.4 473.9,204.9 470.3,204.5" fill="#66699a"  opacity="0.8"/>
<polygon points="480.2,194.1 485.2,194.4 484.9,210.9 479.9,210.6" fill="#3a3456" />
<polygon points="490.6,194.9 496.0,195.2 495.7,211.7 490.3,211.4" fill="#3a3456" />
<polygon points="491.2,200.6 495.6,201.0 495.5,206.5 491.1,206.1" fill="#66699a"  opacity="0.8"/>
<polygon points="501.0,195.6 506.7,196.1 506.4,212.6 500.7,212.1" fill="#3a3456" />
<polygon points="501.6,201.4 506.3,201.8 506.2,207.3 501.5,206.8" fill="#66699a"  opacity="0.8"/>
<polygon points="511.4,196.4 517.5,196.9 517.2,213.4 511.1,212.9" fill="#3a3456" />
<polygon points="512.0,202.2 517.1,202.6 517.0,208.1 511.9,207.6" fill="#66699a"  opacity="0.8"/>
<polygon points="473.6,211.5 478.4,212.0 477.6,228.2 472.8,227.7" fill="#3a3456" />
<polygon points="474.2,217.2 478.0,217.7 477.8,223.0 474.0,222.5" fill="#66699a"  opacity="0.8"/>
<polygon points="483.8,212.6 489.1,213.2 488.3,229.4 483.0,228.8" fill="#3a3456" />
<polygon points="484.4,218.3 488.7,218.9 488.5,224.2 484.2,223.6" fill="#66699a"  opacity="0.8"/>
<polygon points="494.0,213.8 499.8,214.4 499.0,230.6 493.2,229.9" fill="#3a3456" />
<polygon points="504.2,214.9 510.5,215.6 509.7,231.8 503.4,231.1" fill="#3a3456" />
<polygon points="504.8,220.5 510.1,221.2 509.9,226.6 504.6,225.9" fill="#66699a"  opacity="0.8"/>
<polygon points="514.4,216.0 521.2,216.8 520.4,232.9 513.6,232.2" fill="#3a3456" />
<polygon points="515.0,221.7 520.8,222.4 520.6,227.8 514.8,227.0" fill="#66699a"  opacity="0.8"/>
<polygon points="468.3,227.4 473.6,228.3 472.1,243.9 466.8,243.0" fill="#3a3456" />
<polygon points="478.1,229.1 483.6,230.1 482.1,245.7 476.6,244.7" fill="#3a3456" />
<polygon points="488.0,230.8 493.7,231.8 492.2,247.4 486.5,246.4" fill="#3a3456" />
<polygon points="497.8,232.5 503.7,233.5 502.2,249.1 496.3,248.1" fill="#3a3456" />
<polygon points="507.6,234.2 513.7,235.3 512.2,250.9 506.1,249.8" fill="#3a3456" />
<polygon points="470.5,244.8 475.4,245.8 473.4,260.8 468.5,259.8" fill="#3a3456" />
<polygon points="480.1,246.9 485.5,248.0 483.5,263.0 478.1,261.9" fill="#3a3456" />
<polygon points="489.8,248.9 495.7,250.2 493.7,265.2 487.8,263.9" fill="#3a3456" />
<polygon points="499.5,250.9 505.9,252.3 503.9,267.3 497.5,265.9" fill="#3a3456" />
<polygon points="509.1,253.0 516.0,254.5 514.0,269.5 507.1,268.0" fill="#3a3456" />
<polygon points="464.5,259.2 469.8,260.6 466.8,274.4 461.5,273.0" fill="#3a3456" />
<polygon points="473.8,261.6 479.2,263.1 476.2,276.9 470.8,275.4" fill="#3a3456" />
<polygon points="483.1,264.1 488.7,265.6 485.7,279.4 480.1,277.9" fill="#3a3456" />
<polygon points="492.3,266.6 498.2,268.1 495.2,281.9 489.3,280.4" fill="#3a3456" />
<polygon points="501.6,269.0 507.6,270.6 504.6,284.4 498.6,282.8" fill="#3a3456" />
</g>
<path d="M478 88 L478 80 L492 79 L492 76 M492 79 L506 77 L506 73" stroke="#d8dcee" stroke-width="0.8" fill="none" opacity="0.8"/>
<g filter="url(#b1)">
<polygon points="2.0,32.0 95.0,32.0 88.0,44.0 83.0,60.0 81.0,75.0 80.0,100.0 2.0,134.0" fill="#15131c" />
<polygon points="48.0,32.0 93.0,32.0 86.0,46.0 82.0,62.0 80.0,88.0 62.0,80.0 60.0,50.0" fill="url(#stripe)" />
<polygon points="60.0,62.0 80.0,62.0 80.0,78.0 60.0,74.0" fill="#1a1822"  opacity="0.75"/>
<polygon points="82.0,99.0 95.0,103.0 98.0,122.0 92.0,126.0 84.0,120.0 76.0,112.0" fill="#1b1a2c" />
<path d="M36 86 L36 60 Q37 46 48 45 Q60 46 60 62 L60 86 Z" fill="url(#armg)"/>
<path d="M36 62 L36 60 Q37 46 48 45 Q60 46 60 62 Z" fill="#3a3a40" opacity="0.75"/>
<polygon points="2.0,55.0 12.0,55.0 41.0,72.5 41.0,80.0 30.0,89.5 2.0,76.0" fill="#626562" />
<polygon points="2.0,56.0 12.0,55.0 41.0,72.5 40.0,75.0 2.0,60.0" fill="#6e716c" />
<polygon points="2.0,76.0 30.0,89.5 36.0,86.0 36.0,100.0 30.0,104.0 20.0,112.0 2.0,101.0" fill="#4c4f51" />
<polygon points="2.0,76.0 30.0,89.5 36.0,86.0 36.0,90.0 30.0,93.5 2.0,80.0" fill="#242626" />
<polygon points="2.0,101.0 20.0,112.0 14.0,120.0 2.0,110.0" fill="#4e4a28" />
<polygon points="2.0,110.0 14.0,120.0 8.0,128.0 2.0,132.0" fill="#2a2622" />
<polygon points="60.0,79.0 83.0,92.0 80.0,96.0 72.0,100.0 62.0,98.0 60.0,92.0" fill="#828780" />
<polygon points="62.0,94.0 72.0,97.0 76.0,108.0 70.0,112.0 63.0,104.0" fill="#565b56" />
<polygon points="60.0,79.0 83.0,92.0 82.5,93.2 60.0,80.5" fill="#c8cbc4" />
<ellipse cx="81.5" cy="102" rx="8" ry="11.5" transform="rotate(22 81.5 102)" fill="#141019"/>
<polygon points="36.0,84.0 60.0,84.0 62.0,94.0 70.0,101.0 74.0,106.0 24.0,106.0 30.0,100.0 34.0,94.0" fill="url(#neckg)" />
<polygon points="30.0,100.0 70.0,101.0 74.0,106.0 24.0,106.0" fill="#000"  opacity="0.12"/>
<path d="M-2 190 L-2 134 Q8 112 26 104 Q50 97 72 103 Q92 112 102 138 Q108 158 109 181 L109 183 Q60 184.5 -2 184 Z" fill="url(#dome)"/>
<path d="M-2 190 L-2 134 Q8 112 26 104 Q50 97 72 103 Q92 112 102 138 Q108 158 109 181 L109 183 Q60 184.5 -2 184 Z" fill="url(#domev)"/>
<path d="M2 183 Q60 184 109 182 L108.6 186 Q106 189 98 189.6 Q50 190.5 2 190 Z" fill="url(#rimg)"/>
<path d="M2 182.4 Q60 183.6 109 181.4 L109 182.6 Q60 184.6 2 183.4 Z" fill="#2a2a2e"/>
<polygon points="2.0,190.0 98.0,190.0 110.0,205.0 150.0,237.0 222.0,286.0 2.0,286.0" fill="#0d0b12" />
<path d="M6 191 Q6 228 30 236 Q50 242 72 234 Q96 224 96 191 Z" fill="url(#bdome)"/>
</g>
<g filter="url(#b1)">
<polygon points="94.0,204.0 100.0,204.0 150.0,240.0 232.0,286.0 60.0,286.0 60.0,240.0 94.0,236.0" fill="#1b1a1f" />
<polygon points="97.0,206.0 112.0,214.0 140.0,236.0 186.0,286.0 150.0,286.0 122.0,250.0 100.0,222.0" fill="#5c5b48" />
<polygon points="100.0,222.0 122.0,250.0 150.0,286.0 120.0,286.0 104.0,256.0 92.0,232.0" fill="#45453a" />
<rect x="60" y="246.0" width="46" height="1.8" fill="#a0a098" opacity="0.38"/>
<rect x="62" y="251.5" width="53" height="1.8" fill="#a0a098" opacity="0.38"/>
<rect x="64" y="257.0" width="60" height="1.8" fill="#a0a098" opacity="0.38"/>
<rect x="66" y="262.5" width="67" height="1.8" fill="#a0a098" opacity="0.38"/>
<rect x="68" y="268.0" width="74" height="1.8" fill="#a0a098" opacity="0.38"/>
<rect x="70" y="273.5" width="81" height="1.8" fill="#a0a098" opacity="0.38"/>
<rect x="72" y="279.0" width="88" height="1.8" fill="#a0a098" opacity="0.38"/>
<polygon points="95.9,207.6 227.5,293.3 231.8,286.5 97.3,205.4" fill="#121016" />
<polygon points="95.0,211.0 199.1,292.4 203.3,286.8 96.4,209.0" fill="#121016" />
<polygon points="93.3,216.2 172.8,291.4 176.8,286.9 94.7,214.6" fill="#121016" />
<polygon points="89.7,223.7 148.6,290.2 152.3,286.9 91.3,222.3" fill="#121016" />
<polygon points="84.2,230.6 128.3,289.3 131.6,286.7 85.8,229.4" fill="#121016" />
<polygon points="77.3,235.0 113.9,288.6 116.6,286.7 78.7,234.0" fill="#121016" />
<polygon points="68.3,238.4 101.2,288.2 103.7,286.5 69.7,237.6" fill="#121016" />
<polygon points="57.3,241.9 79.5,287.7 81.8,286.5 58.7,241.1" fill="#121016" />
<polygon points="43.3,241.6 46.6,287.2 49.0,287.0 44.7,241.4" fill="#121016" />
<polygon points="32.4,241.0 30.9,287.4 32.9,287.5 33.6,241.0" fill="#121016" />
<rect x="40" y="243.5" width="70" height="2.6" fill="#121018"/>
<rect x="40" y="268.5" width="100" height="2.8" fill="#121018"/>
</g>
</g>
<text x="3.5" y="43.2" textLength="201" lengthAdjust="spacingAndGlyphs" style="font-family:'Liberation Sans',sans-serif;font-weight:normal" font-size="11" fill="#fff" stroke="#15151a" stroke-width="1.5" paint-order="stroke" stroke-linejoin="round">2019-04-24 15:49:24</text>
<text x="4.5" y="57.6" textLength="73" lengthAdjust="spacingAndGlyphs" style="font-family:'Liberation Sans',sans-serif;font-weight:normal" font-size="11" fill="#fff" stroke="#15151a" stroke-width="1.5" paint-order="stroke" stroke-linejoin="round">FI9928P</text>
</svg>
</div>

<div class="abs" style="left:1085px;top:30px;width:1px;height:1px;background:#1c2c44"></div>
<!-- tree -->
<div id="tree">
<svg class="abs" style="left:0;top:0" width="278" height="80" viewBox="1088 31 278 80">
<defs>
<linearGradient id="cbg" x1="0" y1="0" x2="1" y2="1"><stop offset="0" stop-color="#cfd0d2"/><stop offset="1" stop-color="#fafafa"/></linearGradient>
<linearGradient id="camg" x1="0" y1="0" x2="0" y2="1"><stop offset="0" stop-color="#5a9be0"/><stop offset="1" stop-color="#2f74c0"/></linearGradient>
<radialGradient id="webg" cx="0.5" cy="0.4" r="0.6"><stop offset="0" stop-color="#6db0ee"/><stop offset="1" stop-color="#2d72c4"/></radialGradient>
</defs>
<g stroke="#9a9a9a" stroke-width="1" stroke-dasharray="1 1" fill="none">
<path d="M1105 40.5 H1111"/><path d="M1119.5 47 V89"/><path d="M1120 56.5 H1130"/><path d="M1120 72.5 H1130"/><path d="M1120 88.5 H1130"/>
</g>
<rect x="1096.5" y="36.5" width="8" height="8" rx="1" fill="#fcfcfc" stroke="#8f8f8f"/><path d="M1098 40.5 H1103" stroke="#3f56a6" stroke-width="1"/>
<g stroke="#8e8f8f" fill="url(#cbg)">
<rect x="1111.5" y="33.5" width="12" height="12"/>
<rect x="1130.5" y="49.5" width="12" height="12"/>
<rect x="1130.5" y="65.5" width="12" height="12"/>
<rect x="1130.5" y="81.5" width="12" height="12"/>
</g>
<g fill="none" stroke="#f4f4f4"><rect x="1112.5" y="34.5" width="10" height="10"/><rect x="1131.5" y="50.5" width="10" height="10"/><rect x="1131.5" y="66.5" width="10" height="10"/><rect x="1131.5" y="82.5" width="10" height="10"/></g>
<path d="M1133.2 55.6 L1135.6 58.6 L1139.8 51.8" stroke="#31418e" stroke-width="1.7" fill="none"/>
<rect x="1126.5" y="46.5" width="23" height="17" fill="none" stroke="#ee0f18"/>
<circle cx="1131.6" cy="38.8" r="6.4" fill="url(#webg)"/><circle cx="1131.6" cy="38.6" r="3" fill="none" stroke="#e8f2fc" stroke-width="1.3"/><circle cx="1131.6" cy="38.6" r="1.2" fill="#2a66b0"/><rect x="1127.5" y="46" width="9" height="1.6" fill="#3a7ccb"/>
<g fill="url(#camg)">
<path d="M1144 51.5 h10 v3 l4.6 -2.6 v8 l-4.6 -2.6 v3.5 h-10 z"/>
<path d="M1144 67.5 h10 v3 l4.6 -2.6 v8 l-4.6 -2.6 v3.5 h-10 z"/>
<path d="M1144 83.5 h10 v3 l4.6 -2.6 v8 l-4.6 -2.6 v3.5 h-10 z"/>
</g>
</svg>
<div class="tl" style="left:56.5px;top:1px;letter-spacing:-0.17px">Video Input Device</div>
<div class="tl" style="left:75px;top:17px;letter-spacing:-0.49px">Summer(3X8JXC51KG3G662Z111ABZZZ)</div>
<div class="tl" style="left:76px;top:33px;letter-spacing:-0.59px">123(NEVGRKPCFDDVX731111AAZZZ )</div>
<div class="tl" style="left:75px;top:49px;letter-spacing:-0.27px">Garage(00626E8550D1)</div>
</div>


<!-- record type group -->
<div class="abs" style="left:1089px;top:418px;width:276px;height:79px;border:1px solid rgba(255,255,255,0.45);border-right:none"></div>
<div class="abs" style="left:1090px;top:419px;width:275px;height:78px;border:1px solid #fff;"></div>
<div class="abs" style="left:1095px;top:414px;width:66px;height:10px;background:#2a3b4e"></div>
<div class="wt" style="left:1097px;top:413px">Record Type</div>
<div class="abs" style="left:1099px;top:438px;width:13px;height:13px;background:#fff;border:1px solid #808080;border-right-color:#e8e8e8;border-bottom-color:#e8e8e8"><div class="abs" style="left:0;top:0;width:11px;height:11px;border:1px solid #404040;border-right-color:#d4d0c8;border-bottom-color:#d4d0c8"></div><svg class="abs" style="left:2px;top:2px" width="7" height="7" viewBox="0 0 7 7"><path d="M0.5 2.5 L2.5 4.7 L6.5 0.7" stroke="#000" stroke-width="1.9" fill="none"/></svg></div><div class="wt" style="left:1116px;top:438px;letter-spacing:-0.2px">Plan</div>
<div class="abs" style="left:1224px;top:438px;width:13px;height:13px;background:#fff;border:1px solid #808080;border-right-color:#e8e8e8;border-bottom-color:#e8e8e8"><div class="abs" style="left:0;top:0;width:11px;height:11px;border:1px solid #404040;border-right-color:#d4d0c8;border-bottom-color:#d4d0c8"></div><svg class="abs" style="left:2px;top:2px" width="7" height="7" viewBox="0 0 7 7"><path d="M0.5 2.5 L2.5 4.7 L6.5 0.7" stroke="#000" stroke-width="1.9" fill="none"/></svg></div><div class="wt" style="left:1241px;top:438px;letter-spacing:-0.18px">Manual</div>
<div class="abs" style="left:1099px;top:469px;width:13px;height:13px;background:#fff;border:1px solid #808080;border-right-color:#e8e8e8;border-bottom-color:#e8e8e8"><div class="abs" style="left:0;top:0;width:11px;height:11px;border:1px solid #404040;border-right-color:#d4d0c8;border-bottom-color:#d4d0c8"></div><svg class="abs" style="left:2px;top:2px" width="7" height="7" viewBox="0 0 7 7"><path d="M0.5 2.5 L2.5 4.7 L6.5 0.7" stroke="#000" stroke-width="1.9" fill="none"/></svg></div><div class="wt" style="left:1116.5px;top:469px;letter-spacing:-0.3px">Alarm</div>
<div class="wt" style="left:1088.5px;top:508px;letter-spacing:-0.07px">Date of Record</div>
<div class="abs" style="left:1089px;top:537px;width:275px;height:36px;background:#fff;border-radius:3px 2px 2px 2px;border-top:1px solid #c2c5ca"></div>
<div class="abs" style="left:1091px;top:548px;font-size:11px;line-height:14px;color:#000;white-space:pre;letter-spacing:0.08px">2019/  4/24</div>
<svg class="abs" style="left:1336px;top:547px" width="26" height="16" viewBox="1336 547 26 16"><rect x="1338.5" y="549.5" width="10" height="11" rx="1" fill="#eef0f4" stroke="#8a7a78"/><path d="M1340.5 552.5h6M1340.5 554.5h6M1340.5 556.5h6M1340.5 558.5h6M1342.5 551.5v8M1344.5 551.5v8M1346.5 551.5v8" stroke="#8e98b4" stroke-width="0.8" fill="none"/><path d="M1351 553.2 h7.4 l-3.7 4 z" fill="#3c5078"/></svg>
<div class="abs" style="left:1090px;top:577px;width:274px;height:57px;border:1px solid #ee0f18"></div>
<div class="abs" style="left:1091px;top:584px;width:272px;height:40px;background:linear-gradient(#7aafd0,#6ea4cb 35%,#4b84bb);border-top:1px solid #8fc3df"></div>
<div class="abs" style="left:1091px;top:624px;width:272px;height:1px;background:#3a3e44"></div><div class="abs" style="left:1091px;top:591px;width:272px;text-align:center;font-size:18px;line-height:26px;font-weight:bold;color:#fff;text-shadow:1px 1px 1px rgba(40,50,60,0.75)">Search</div>
<div class="abs" style="left:1087px;top:398px;width:278px;height:1px;background:#8a919c"></div>
<!-- toolbar -->
<div id="toolbar"><svg class="abs" style="left:0;top:0" width="1086" height="39" viewBox="0 568 1086 39"><defs><linearGradient id="btn" x1="0" y1="0" x2="0" y2="1"><stop offset="0" stop-color="#ececec"/><stop offset="1" stop-color="#cdcdcd"/></linearGradient><linearGradient id="ic" x1="0" y1="0" x2="0" y2="1"><stop offset="0" stop-color="#858789"/><stop offset="1" stop-color="#a3a5a6"/></linearGradient></defs><g transform="translate(272,588)"><circle r="13.4" fill="rgba(30,60,100,0.35)" cy="0.6"/><circle r="13" fill="url(#btn)"/><rect x="-6" y="-6.5" width="4" height="13.5" fill="url(#ic)"/><rect x="2" y="-6.5" width="4" height="13.5" fill="url(#ic)"/></g><g transform="translate(317,588)"><circle r="13.4" fill="rgba(30,60,100,0.35)" cy="0.6"/><circle r="13" fill="url(#btn)"/><path d="M-5 -7.5 L7 0 L-5 7.5 Z" fill="url(#ic)"/></g><g transform="translate(365,588)"><circle r="13.4" fill="rgba(30,60,100,0.35)" cy="0.6"/><circle r="13" fill="url(#btn)"/><path d="M-5 -7 H5 V-3.6 H-1.2 V-1 H3.4 V2.2 H-1.2 V7 H-5 Z" fill="url(#ic)"/></g><g transform="translate(415,588)"><circle r="13.4" fill="rgba(30,60,100,0.35)" cy="0.6"/><circle r="13" fill="url(#btn)"/><rect x="-5" y="-5" width="10" height="10" fill="url(#ic)"/></g><g transform="translate(466,588)"><circle r="13.4" fill="rgba(30,60,100,0.35)" cy="0.6"/><circle r="13" fill="url(#btn)"/><path d="M-1 -6 V6 L-10 0 Z M8 -6 V6 L-1 0 Z" fill="url(#ic)"/></g><g transform="translate(515,588)"><circle r="13.4" fill="rgba(30,60,100,0.35)" cy="0.6"/><circle r="13" fill="url(#btn)"/><path d="M1 -6 V6 L10 0 Z M-8 -6 V6 L1 0 Z" fill="url(#ic)"/></g><g transform="translate(569,588)"><circle r="13.4" fill="rgba(30,60,100,0.35)" cy="0.6"/><circle r="13" fill="url(#btn)"/><path d="M-7 -6.5 H-1.5 L0 -5 H7.5 V-3 H-7 Z M-7 -2 H7.5 V6.5 H-7 Z" fill="url(#ic)"/></g><rect x="303.5" y="571.5" width="28" height="32" fill="none" stroke="#ee0f18"/><rect x="606" y="574" width="75" height="27" rx="0.8" fill="#2a3b4e" stroke="#fff" stroke-width="2"/><g font-family="Liberation Serif" font-size="15" fill="#fff" text-anchor="middle"><text x="636.6" y="588.3">&gt;</text><text x="644.6" y="588.3">&gt;</text><text x="651.4" y="587.2" font-size="12.5">1</text></g></svg></div>
<div class="abs" style="left:0;top:607px;width:1087px;height:1px;background:#232a31"></div><div class="abs" style="left:1086px;top:608px;width:1px;height:66px;background:#1b2733"></div>
<div class="abs" style="left:0;top:608px;width:2px;height:66px;background:#0a0d12"></div>
<div id="tline"><svg class="abs" style="left:0;top:0" width="1084" height="66" viewBox="2 608 1084 66" shape-rendering="crispEdges"><g fill="#aec6da"><rect x="151" y="609" width="1" height="65"/><rect x="190" y="609" width="1" height="65"/><rect x="229" y="609" width="1" height="65"/><rect x="268" y="609" width="1" height="65"/><rect x="307" y="609" width="1" height="65"/><rect x="346" y="609" width="1" height="65"/><rect x="385" y="609" width="1" height="65"/><rect x="424" y="609" width="1" height="65"/><rect x="463" y="609" width="1" height="65"/><rect x="502" y="609" width="1" height="65"/><rect x="541" y="609" width="1" height="65"/><rect x="580" y="609" width="1" height="65"/><rect x="619" y="609" width="1" height="65"/><rect x="658" y="609" width="1" height="65"/><rect x="697" y="609" width="1" height="65"/><rect x="736" y="609" width="1" height="65"/><rect x="775" y="609" width="1" height="65"/><rect x="814" y="609" width="1" height="65"/><rect x="853" y="609" width="1" height="65"/><rect x="892" y="609" width="1" height="65"/><rect x="931" y="609" width="1" height="65"/><rect x="970" y="609" width="1" height="65"/><rect x="1009" y="609" width="1" height="65"/><rect x="1048" y="609" width="1" height="65"/><rect x="2" y="637" width="1084" height="1"/><rect x="2" y="666" width="1084" height="1"/></g><rect x="592" y="638" width="2" height="27" fill="#0000ff"/><rect x="606" y="638" width="7" height="27" fill="#0000ff"/><rect x="603" y="635" width="13" height="33" fill="#eaf6fb" opacity="0.55"/><rect x="606" y="638" width="7" height="27" fill="#0000ff"/><rect x="602.5" y="634.5" width="14" height="34" fill="none" stroke="#ff0000"/><rect x="764" y="638" width="4" height="27" fill="#0000ff"/><rect x="768" y="637" width="2" height="29" fill="#4a84c2"/><rect x="756.5" y="635.5" width="17" height="31" fill="none" stroke="#ff0000"/><rect x="2.5" y="647.5" width="17" height="18" fill="none" stroke="#ee0f18"/><rect x="4.5" y="649.5" width="13" height="14" fill="#fdfdfd" stroke="#6e6e6e"/><path d="M7 656.5 L10 660 L15.5 652.5" stroke="#3a3a3a" stroke-width="1.4" fill="none" shape-rendering="auto"/></svg><div class="abs" style="left:3px;top:12px;font-size:13px;line-height:16px;color:#1d2f5c;white-space:nowrap;letter-spacing:-0.05px">Camera Name</div><div class="abs" style="left:19px;top:41px;font-size:13px;line-height:16px;color:#1d2f5c;white-space:nowrap;letter-spacing:-0.47px">Summer(3X8JXC51...</div><div class="abs" style="left:152px;top:12px;font-size:13px;line-height:16px;color:#1d2f5c;letter-spacing:-0.2px">0</div><div class="abs" style="left:191px;top:12px;font-size:13px;line-height:16px;color:#1d2f5c;letter-spacing:-0.2px">1</div><div class="abs" style="left:230px;top:12px;font-size:13px;line-height:16px;color:#1d2f5c;letter-spacing:-0.2px">2</div><div class="abs" style="left:269px;top:12px;font-size:13px;line-height:16px;color:#1d2f5c;letter-spacing:-0.2px">3</div><div class="abs" style="left:308px;top:12px;font-size:13px;line-height:16px;color:#1d2f5c;letter-spacing:-0.2px">4</div><div class="abs" style="left:347px;top:12px;font-size:13px;line-height:16px;color:#1d2f5c;letter-spacing:-0.2px">5</div><div class="abs" style="left:386px;top:12px;font-size:13px;line-height:16px;color:#1d2f5c;letter-spacing:-0.2px">6</div><div class="abs" style="left:425px;top:12px;font-size:13px;line-height:16px;color:#1d2f5c;letter-spacing:-0.2px">7</div><div class="abs" style="left:464px;top:12px;font-size:13px;line-height:16px;color:#1d2f5c;letter-spacing:-0.2px">8</div><div class="abs" style="left:503px;top:12px;font-size:13px;line-height:16px;color:#1d2f5c;letter-spacing:-0.2px">9</div><div class="abs" style="left:542px;top:12px;font-size:13px;line-height:16px;color:#1d2f5c;letter-spacing:-0.2px">10</div><div class="abs" style="left:581px;top:12px;font-size:13px;line-height:16px;color:#1d2f5c;letter-spacing:-0.2px">11</div><div class="abs" style="left:620px;top:12px;font-size:13px;line-height:16px;color:#1d2f5c;letter-spacing:-0.2px">12</div><div class="abs" style="left:659px;top:12px;font-size:13px;line-height:16px;color:#1d2f5c;letter-spacing:-0.2px">13</div><div class="abs" style="left:698px;top:12px;font-size:13px;line-height:16px;color:#1d2f5c;letter-spacing:-0.2px">14</div><div class="abs" style="left:737px;top:12px;font-size:13px;line-height:16px;color:#1d2f5c;letter-spacing:-0.2px">15</div><div class="abs" style="left:776px;top:12px;font-size:13px;line-height:16px;color:#1d2f5c;letter-spacing:-0.2px">16</div><div class="abs" style="left:815px;top:12px;font-size:13px;line-height:16px;color:#1d2f5c;letter-spacing:-0.2px">17</div><div class="abs" style="left:854px;top:12px;font-size:13px;line-height:16px;color:#1d2f5c;letter-spacing:-0.2px">18</div><div class="abs" style="left:893px;top:12px;font-size:13px;line-height:16px;color:#1d2f5c;letter-spacing:-0.2px">19</div><div class="abs" style="left:932px;top:12px;font-size:13px;line-height:16px;color:#1d2f5c;letter-spacing:-0.2px">20</div><div class="abs" style="left:971px;top:12px;font-size:13px;line-height:16px;color:#1d2f5c;letter-spacing:-0.2px">21</div><div class="abs" style="left:1010px;top:12px;font-size:13px;line-height:16px;color:#1d2f5c;letter-spacing:-0.2px">22</div><div class="abs" style="left:1049px;top:12px;font-size:13px;line-height:16px;color:#1d2f5c;letter-spacing:-0.2px">23</div></div>
</body></html>
